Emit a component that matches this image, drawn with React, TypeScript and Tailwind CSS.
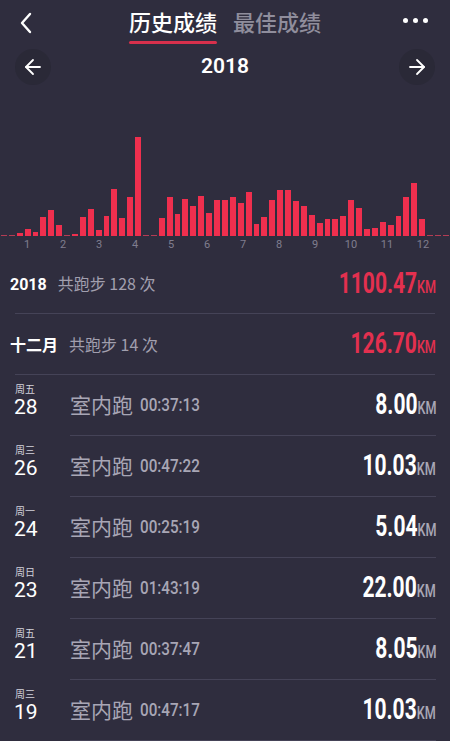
import { ArrowLeft, ArrowRight } from 'lucide-react'

const weeks = [
  0, 0, 3, 7, 4, 19, 26, 11, 0, 2, 19, 27, 6, 20, 47, 18, 39, 99, 0, 0, 18, 39, 22, 37, 30, 40, 23, 36, 36, 39, 33,
  44, 12, 19, 36, 46, 46, 35, 30, 21, 13, 17, 17, 20, 36, 28, 7, 8, 14, 11, 20, 39, 53, 17, 0, 0, 0,
]

const runs = [
  { week: '周五', day: '28', time: '00:37:13', km: '8.00' },
  { week: '周三', day: '26', time: '00:47:22', km: '10.03' },
  { week: '周一', day: '24', time: '00:25:19', km: '5.04' },
  { week: '周日', day: '23', time: '01:43:19', km: '22.00' },
  { week: '周五', day: '21', time: '00:37:47', km: '8.05' },
  { week: '周三', day: '19', time: '00:47:17', km: '10.03' },
]

const cjk = "font-['Noto_Sans_CJK_SC',sans-serif]"
const num = "font-['Roboto','Noto_Sans_CJK_SC',sans-serif]"

function Distance({ value, red }: { value: string; red?: boolean }) {
  return (
    <span className={`inline-block origin-right scale-x-[0.7] whitespace-nowrap font-bold ${num}`}>
      <span className={`text-[30px] leading-none ${red ? 'text-[#e3304f]' : 'text-white'}`}>{value}</span>
      <span className={`text-[18px] leading-none font-medium ${red ? 'text-[#e3304f]' : 'text-[#a9a7b6]'}`}>KM</span>
    </span>
  )
}

export default function App() {
  return (
    <div className="h-[741px] w-[450px] overflow-hidden bg-[#2f2d3e] text-white">
      {/* header tabs */}
      <div className="grid h-[46px] grid-cols-[1fr_auto_1fr]">
        <div className="flex items-start pl-[19px] pt-[12px]">
          <svg width="14" height="22" viewBox="0 0 14 22" fill="none">
            <path d="M11 2 L3 11 L11 20" stroke="white" strokeWidth="2.4" strokeLinecap="round" strokeLinejoin="round" />
          </svg>
        </div>
        <div className={`flex gap-4 pt-[9px] ${cjk}`}>
          <div className="flex flex-col items-stretch">
            <span className="text-[22px] leading-[24px] font-medium text-white">历史成绩</span>
            <span className="mt-[8px] h-[3px] rounded-full bg-[#d8304c]" />
          </div>
          <span className="text-[22px] leading-[24px] font-medium text-[#8f8d9c]">最佳成绩</span>
        </div>
        <div className="flex justify-end gap-[5px] pr-[22px] pt-[18px]">
          <span className="h-[5px] w-[5px] rounded-full bg-white" />
          <span className="h-[5px] w-[5px] rounded-full bg-white" />
          <span className="h-[5px] w-[5px] rounded-full bg-white" />
        </div>
      </div>

      {/* year switcher */}
      <div className="flex h-[42px] items-center justify-between px-[15px]">
        <span className="flex h-9 w-9 items-center justify-center rounded-full bg-[#2a2937]">
          <ArrowLeft className="h-6 w-6" strokeWidth={1.8} />
        </span>
        <span className={`text-[21px] font-semibold ${num}`}>2018</span>
        <span className="flex h-9 w-9 items-center justify-center rounded-full bg-[#2a2937]">
          <ArrowRight className="h-6 w-6" strokeWidth={1.8} />
        </span>
      </div>

      {/* weekly chart */}
      <div className="flex h-[148px] items-end">
        {weeks.map((h, i) => (
          <div key={i} className="flex flex-1 items-end px-[1px]">
            {h === 0 ? (
              <div className="h-[1px] w-full bg-[#d6405a]/80" />
            ) : (
              <div className="w-full bg-[#ef2f4e]" style={{ height: h }} />
            )}
          </div>
        ))}
      </div>
      <div className={`flex h-[18px] items-center pl-[9px] text-[11px] text-[#807e8f] ${num}`}>
        {Array.from({ length: 12 }, (_, i) => (
          <span key={i} className="w-9 text-center">
            {i + 1}
          </span>
        ))}
      </div>

      {/* totals */}
      <div className="flex h-[59px] items-center justify-between pr-[14px] pl-[10px]">
        <div className="flex items-baseline gap-[11px]">
          <span className={`text-[16px] font-bold ${num}`}>2018</span>
          <span className={`text-[16px] text-[#a19fae] ${cjk}`}>共跑步 128 次</span>
        </div>
        <Distance value="1100.47" red />
      </div>
      <div className="mx-[15px] h-px bg-[#454357]" />
      <div className="flex h-[60px] items-center justify-between pr-[14px] pl-[10px]">
        <div className="flex items-baseline gap-[11px]">
          <span className={`text-[16px] font-bold ${cjk}`}>十二月</span>
          <span className={`text-[16px] text-[#a19fae] ${cjk}`}>共跑步 14 次</span>
        </div>
        <Distance value="126.70" red />
      </div>
      <div className="mx-[15px] h-px bg-[#454357]" />

      {/* runs */}
      {runs.map((r) => (
        <div key={r.day}>
          <div className="flex h-[60px] items-center pr-[14px]">
            <div className="flex w-[70px] flex-col self-start pl-[14px] pt-[9px]">
              <span className={`pl-px text-[10px] leading-[10px] text-[#d3d2dc] ${cjk}`}>{r.week}</span>
              <span className={`mt-[3px] text-[21px] leading-[21px] ${num}`}>{r.day}</span>
            </div>
            <span className={`text-[21px] text-[#a8a6b5] ${cjk}`}>室内跑</span>
            <span
              className={`ml-[7px] inline-block origin-left scale-x-[0.8] text-[19px] font-medium text-[#a8a6b5] ${num}`}
            >
              {r.time}
            </span>
            <span className="ml-auto">
              <Distance value={r.km} />
            </span>
          </div>
          <div className="ml-[70px] mr-[14px] h-px bg-[#454357]" />
        </div>
      ))}
    </div>
  )
}
